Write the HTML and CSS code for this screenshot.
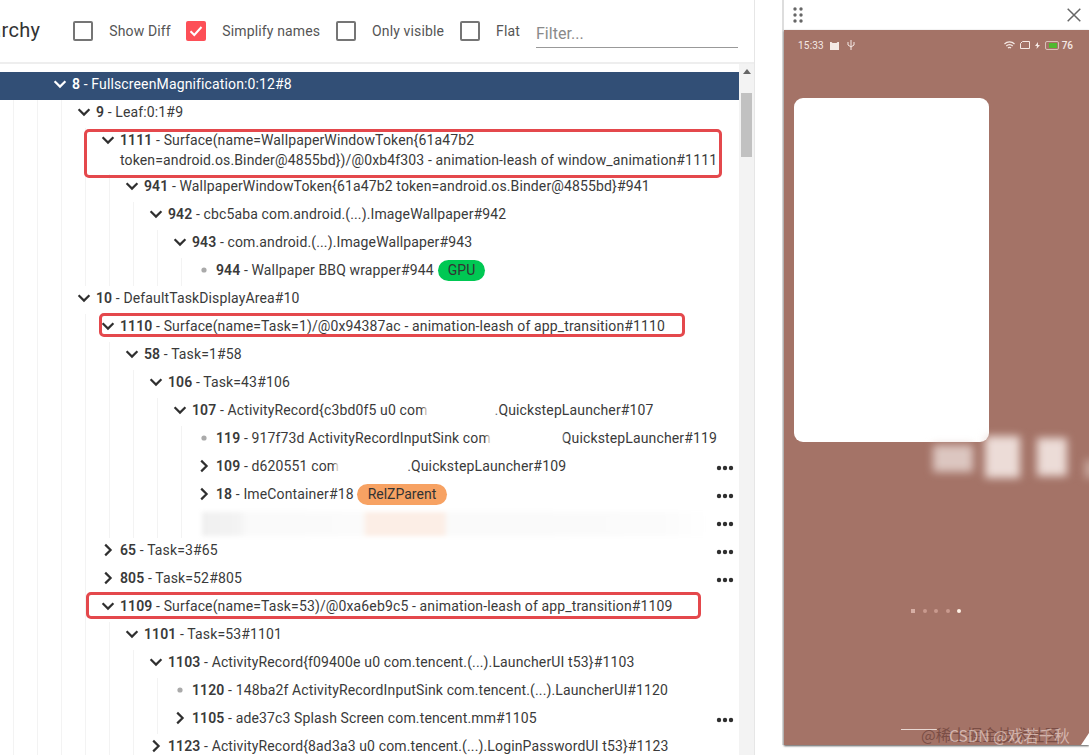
FILE: index.html
```html
<!DOCTYPE html>
<html lang="en">
<head>
<meta charset="utf-8">
<title>Hierarchy</title>
<link rel="stylesheet" href="styles.css">
</head>
<body>
<svg class="defs" width="0" height="0" aria-hidden="true">
  <symbol id="down" viewBox="0 0 24 24"><path d="M6.6 9.2 12 14.6l5.4-5.4" fill="none" stroke="currentColor" stroke-width="2.2"/></symbol>
  <symbol id="right" viewBox="0 0 24 24"><path d="M9.2 6.6 14.6 12l-5.4 5.4" fill="none" stroke="currentColor" stroke-width="2.2"/></symbol>
  <symbol id="leaf" viewBox="0 0 24 24"><circle cx="12" cy="12" r="2.6" fill="#aaa"/></symbol>
  <symbol id="more" viewBox="0 0 18 6"><circle cx="3" cy="3" r="2.2"/><circle cx="9" cy="3" r="2.2"/><circle cx="15" cy="3" r="2.2"/></symbol>
</svg>
<main class="app">
  <section class="panel">
    <header class="toolbar">
      <h1 class="title">Hierarchy</h1>
      <div class="opts">
        <label class="opt first"><span class="box"></span>Show Diff</label>
        <label class="opt"><span class="box on"><svg viewBox="0 0 20 20" width="20" height="20"><path d="M4.5 10.2 8.3 14l7.2-8" fill="none" stroke="#fff" stroke-width="2"/></svg></span>Simplify names</label>
        <label class="opt"><span class="box"></span>Only visible</label>
        <label class="opt"><span class="box"></span>Flat</label>
      </div>
      <div class="filter">Filter...</div>
    </header>
    <div class="treewrap">
      <div class="tree">
        <ul class="nest"><li><ul class="nest"><li>
          <div class="row sel"><span class="tog"><svg><use href="#down"/></svg></span><span class="lab"><b>8</b> - FullscreenMagnification:0:12#8</span></div>
          <ul class="nest">
            <li>
              <div class="row"><span class="tog"><svg><use href="#down"/></svg></span><span class="lab"><b>9</b> - Leaf:0:1#9</span></div>
              <ul class="nest"><li>
                <div class="row two"><span class="tog"><svg><use href="#down"/></svg></span><span class="lab"><b>1111</b> - Surface(name=WallpaperWindowToken{61a47b2<br>token=android.os.Binder@4855bd})/@0xb4f303 - animation-leash of window_animation#1111</span></div>
                <ul class="nest"><li>
                  <div class="row"><span class="tog"><svg><use href="#down"/></svg></span><span class="lab"><b>941</b> - WallpaperWindowToken{61a47b2 token=android.os.Binder@4855bd}#941</span></div>
                  <ul class="nest"><li>
                    <div class="row"><span class="tog"><svg><use href="#down"/></svg></span><span class="lab"><b>942</b> - cbc5aba com.android.(...).ImageWallpaper#942</span></div>
                    <ul class="nest"><li>
                      <div class="row"><span class="tog"><svg><use href="#down"/></svg></span><span class="lab"><b>943</b> - com.android.(...).ImageWallpaper#943</span></div>
                      <ul class="nest"><li>
                        <div class="row"><span class="tog"><svg><use href="#leaf"/></svg></span><span class="lab"><b>944</b> - Wallpaper BBQ wrapper#944</span><span class="chip gpu">GPU</span></div>
                      </li></ul>
                    </li></ul>
                  </li></ul>
                </li></ul>
              </li></ul>
            </li>
            <li>
              <div class="row"><span class="tog"><svg><use href="#down"/></svg></span><span class="lab"><b>10</b> - DefaultTaskDisplayArea#10</span></div>
              <ul class="nest">
                <li>
                  <div class="row"><span class="tog"><svg><use href="#down"/></svg></span><span class="lab"><b>1110</b> - Surface(name=Task=1)/@0x94387ac - animation-leash of app_transition#1110</span></div>
                  <ul class="nest"><li>
                    <div class="row"><span class="tog"><svg><use href="#down"/></svg></span><span class="lab"><b>58</b> - Task=1#58</span></div>
                    <ul class="nest"><li>
                      <div class="row"><span class="tog"><svg><use href="#down"/></svg></span><span class="lab"><b>106</b> - Task=43#106</span></div>
                      <ul class="nest"><li>
                        <div class="row"><span class="tog"><svg><use href="#down"/></svg></span><span class="lab"><b>107</b> - ActivityRecord{c3bd0f5 u0 com<span class="smear s1"></span>.QuickstepLauncher#107</span></div>
                        <ul class="nest">
                          <li><div class="row"><span class="tog"><svg><use href="#leaf"/></svg></span><span class="lab"><b>119</b> - 917f73d ActivityRecordInputSink com<span class="smear s2"></span>QuickstepLauncher#119</span></div></li>
                          <li><div class="row"><span class="tog"><svg><use href="#right"/></svg></span><span class="lab"><b>109</b> - d620551 com<span class="smear s3"></span>.QuickstepLauncher#109</span><svg class="more"><use href="#more"/></svg></div></li>
                          <li><div class="row"><span class="tog"><svg><use href="#right"/></svg></span><span class="lab"><b>18</b> - ImeContainer#18</span><span class="chip rel">RelZParent</span><svg class="more"><use href="#more"/></svg></div></li>
                          <li><div class="row"><span class="hazed"></span><svg class="more"><use href="#more"/></svg></div></li>
                        </ul>
                      </li></ul>
                    </li></ul>
                  </li></ul>
                </li>
                <li><div class="row"><span class="tog"><svg><use href="#right"/></svg></span><span class="lab"><b>65</b> - Task=3#65</span><svg class="more"><use href="#more"/></svg></div></li>
                <li><div class="row"><span class="tog"><svg><use href="#right"/></svg></span><span class="lab"><b>805</b> - Task=52#805</span><svg class="more"><use href="#more"/></svg></div></li>
                <li>
                  <div class="row"><span class="tog"><svg><use href="#down"/></svg></span><span class="lab"><b>1109</b> - Surface(name=Task=53)/@0xa6eb9c5 - animation-leash of app_transition#1109</span></div>
                  <ul class="nest"><li>
                    <div class="row"><span class="tog"><svg><use href="#down"/></svg></span><span class="lab"><b>1101</b> - Task=53#1101</span></div>
                    <ul class="nest">
                      <li>
                        <div class="row"><span class="tog"><svg><use href="#down"/></svg></span><span class="lab"><b>1103</b> - ActivityRecord{f09400e u0 com.tencent.(...).LauncherUI t53}#1103</span></div>
                        <ul class="nest">
                          <li><div class="row"><span class="tog"><svg><use href="#leaf"/></svg></span><span class="lab"><b>1120</b> - 148ba2f ActivityRecordInputSink com.tencent.(...).LauncherUI#1120</span></div></li>
                          <li><div class="row"><span class="tog"><svg><use href="#right"/></svg></span><span class="lab"><b>1105</b> - ade37c3 Splash Screen com.tencent.mm#1105</span><svg class="more"><use href="#more"/></svg></div></li>
                        </ul>
                      </li>
                      <li><div class="row"><span class="tog"><svg><use href="#right"/></svg></span><span class="lab"><b>1123</b> - ActivityRecord{8ad3a3 u0 com.tencent.(...).LoginPasswordUI t53}#1123</span></div></li>
                    </ul>
                  </li></ul>
                </li>
              </ul>
            </li>
          </ul>
        </li></ul></li></ul>
        <div class="mark m1"></div>
        <div class="mark m2"></div>
        <div class="mark m3"></div>
      </div>
      <div class="scrollbar">
        <span class="arrow"></span>
        <span class="thumb"></span>
      </div>
    </div>
  </section>
  <aside class="preview">
    <div class="previewbar">
      <svg class="grip" width="10" height="16" viewBox="0 0 10 16"><g fill="#666"><circle cx="2" cy="2" r="1.7"/><circle cx="8" cy="2" r="1.7"/><circle cx="2" cy="8" r="1.7"/><circle cx="8" cy="8" r="1.7"/><circle cx="2" cy="14" r="1.7"/><circle cx="8" cy="14" r="1.7"/></g></svg>
      <svg class="close" width="14" height="14" viewBox="0 0 14 14"><path d="M.7.7l12.6 12.6M13.3.7.7 13.3" stroke="#666" stroke-width="1.5" fill="none"/></svg>
    </div>
    <div class="screen">
      <div class="status">
        <span class="time">15:33</span>
        <svg width="9" height="9" viewBox="0 0 9 9"><path d="M0 1h1.5l1 1h4l1-1H9v8H0z" fill="#f5e9e5"/></svg>
        <svg class="usb" width="8" height="10" viewBox="0 0 8 10"><path d="M4 0v10M1 2v3l3 2 3-2V2" fill="none" stroke="#f5e9e5"/></svg>
        <span class="spacer"></span>
        <svg width="11" height="9" viewBox="0 0 11 9"><path d="M.5 3a7 7 0 0 1 10 0M2.300 5a4.500 4.500 0 0 1 6.400 0M4 7a2 2 0 0 1 3 0" fill="none" stroke="#f5e9e5" stroke-width="1.200"/></svg>
        <svg width="10" height="8" viewBox="0 0 10 8"><path d="M2.500.500h7v7H.5V2.500z" fill="none" stroke="#f5e9e5"/></svg>
        <svg width="5" height="7" viewBox="0 0 5 7"><path d="M3 0 0 4h2L1.500 7 5 3H3z" fill="#f5e9e5"/></svg>
        <span class="batt"><span class="level"></span></span>
        <span class="pct">76</span>
      </div>
      <div class="card"></div>
      <div class="ghosts"><span class="ghost g1"></span><span class="ghost g2"></span><span class="ghost g3"></span><span class="ghost g4"></span></div>
      <div class="pager"><i class="hollow"></i><i></i><i></i><i></i><i class="cur"></i></div>
      <div class="wm"><span class="wm-rule"></span><span class="wm-a">@稀土掘金技术社区</span><span class="wm-b">CSDN @戏若千秋</span></div>
      <span class="corner"></span>
    </div>
  </aside>
</main>
</body>
</html>
```
FILE: styles.css
```css
* { box-sizing: border-box; }
html, body { margin: 0; height: 100%; }
body {
  background: #fff;
  overflow: hidden;
  font-family: Roboto, "Noto Sans", sans-serif;
  font-size: 14px;
  color: #3a3a3a;
}
.defs { position: absolute; }
.app { display: flex; height: 755px; }

.panel {
  width: 755px;
  flex: none;
  display: flex;
  flex-direction: column;
  border-right: 1px solid #e6e6e6;
}
.toolbar {
  height: 64px;
  flex: none;
  display: flex;
  align-items: flex-start;
  border-bottom: 2px solid #eee;
}
.title {
  margin: 17px 33px 0 -47px;
  font-size: 20px;
  line-height: 26px;
  font-weight: 400;
  letter-spacing: .3px;
  color: #333;
  white-space: nowrap;
}
.opts { display: flex; gap: 16px; margin-top: 21px; }
.opt {
  display: flex;
  align-items: center;
  gap: 16px;
  height: 20px;
  letter-spacing: .13px;
  color: #555;
}
.opt.first { margin-right: -.4px; }
.box {
  width: 20px;
  height: 20px;
  border: 2px solid #757575;
  border-radius: 2px;
  display: flex;
  align-items: center;
  justify-content: center;
}
.box.on { background: #fd4f57; border: none; }
.filter {
  width: 202px;
  height: 28px;
  margin: 20px 0 0 16px;
  border-bottom: 1px solid #999;
  font-size: 16px;
  line-height: 27px;
  letter-spacing: .05px;
  color: #8a8a8a;
}

.treewrap { flex: 1; display: flex; min-height: 0; }
.tree {
  position: relative;
  flex: 1;
  min-width: 0;
  overflow: hidden;
  padding-top: 8px;
}
.nest {
  list-style: none;
  margin: 0 0 0 13px;
  padding: 0 0 0 10px;
  border-left: 1px solid #f3f3f3;
}
.row {
  position: relative;
  display: flex;
  height: 28px;
  line-height: 24px;
  padding-right: 5px;
  white-space: nowrap;
}
.row.two { height: 46px; line-height: 20px; padding-top: 2px; }
.row.sel { color: #fff; }
.row.sel::before {
  content: "";
  position: absolute;
  z-index: 0;
  top: 0;
  bottom: 0;
  left: -60px;
  right: 0;
  background: #324f76;
}
.tog { position: relative; flex: none; width: 24px; height: 24px; }
.row.two .tog { margin-top: -2px; }
.tog svg { display: block; width: 24px; height: 24px; color: #2f2f2f; }
.row.sel .tog svg { color: #fff; }
.lab { position: relative; letter-spacing: .135px; }
.lab b { font-weight: 600; letter-spacing: .1px; }
.chip {
  height: 21px;
  line-height: 21px;
  margin: 2px 0 0 4px;
  padding: 0 11px;
  border-radius: 11px;
  color: #333;
}
.gpu { background: #00c853; padding: 0 10px; }
.rel { background: #f7a263; margin-left: 3px; }
.more {
  margin: auto 0 auto auto;
  width: 18px;
  height: 6px;
  fill: #2f2f2f;
}
.smear {
  display: inline-block;
  height: 20px;
  vertical-align: -5px;
  background: #fff;
  filter: blur(2px);
  margin-left: -3px;
}
.s1 { width: 70px; }
.s2 { width: 74px; }
.s3 { width: 71px; }
.hazed {
  position: absolute;
  left: 10px;
  top: 2px;
  width: 508px;
  height: 24px;
  filter: blur(2px);
  background: linear-gradient(90deg, #f0f0f0 0, #f3f3f3 7%, #fafafa 9%, #fbfbfb 31.500%, #fceee6 32.500%, #fceee6 47.500%, #fafafa 48.500%, #fbfbfb 90%, #fff 100%);
}
.mark {
  position: absolute;
  border: 3px solid #e4484c;
  border-radius: 5px;
}
.m1 { left: 84px; top: 65px; width: 638px; height: 49px; }
.m2 { left: 99px; top: 249px; width: 586px; height: 24px; }
.m3 { left: 86px; top: 528px; width: 615px; height: 27px; }

.scrollbar {
  flex: none;
  width: 15px;
  position: relative;
  background: #f3f3f3;
  display: flex;
  flex-direction: column;
  align-items: center;
}
.arrow {
  margin-top: 5px;
  width: 0;
  height: 0;
  border: 4px solid transparent;
  border-top: 0;
  border-bottom: 5px solid #666;
}
.thumb {
  margin-top: 19px;
  width: 11px;
  height: 64px;
  background: #c1c1c1;
}

.preview {
  width: 307px;
  flex: none;
  margin-left: 27px;
  display: flex;
  flex-direction: column;
  border-left: 2px solid #ddd;
  height: 745px;
}
.previewbar {
  flex: none;
  height: 30px;
  display: flex;
  align-items: center;
  justify-content: space-between;
  padding: 0 8px 0 9px;
  background: #fff;
}
.screen {
  position: relative;
  flex: 1;
  background: #a47367;
  box-shadow: 0 1px 2px #555;
  overflow: hidden;
}
.status {
  display: flex;
  align-items: center;
  gap: 5px;
  height: 14px;
  margin: 8px 0 0 14px;
  padding-right: 16px;
  font-size: 10px;
  color: #f5e9e5;
}
.time { letter-spacing: .2px; margin-right: 1px; }
.usb { margin-left: 3px; }
.spacer { flex: 1; }
.status svg { flex: none; }
.batt {
  width: 14px;
  height: 9px;
  border: 1px solid #d8c0b8;
  border-radius: 2px;
  padding: 1px 1px 1px 3px;
  display: flex;
}
.level { flex: 1; background: #4fb82f; }
.pct { margin-left: -2px; font-weight: 500; }
.card {
  width: 195px;
  height: 344px;
  margin: 46px 0 0 10px;
  background: #fff;
  border-radius: 9px;
}
.ghosts {
  position: absolute;
  left: 149px;
  top: 406px;
  display: flex;
  align-items: flex-start;
  gap: 12px;
  filter: blur(4px);
}
.ghost { height: 42px; background: #ecdcd7; }
.g1 { width: 40px; height: 27px; margin-top: 9px; background: #dcc6c0; }
.g2 { width: 35px; }
.g3 { width: 30px; height: 38px; margin-left: 5px; margin-top: 2px; }
.g4 { width: 10px; height: 18px; margin-top: 24px; margin-left: 6px; background: #c9a89f; }
.pager {
  position: absolute;
  left: 127px;
  top: 579px;
  display: flex;
  gap: 7.500px;
}
.pager i { width: 4px; height: 4px; border-radius: 50%; background: #c99a8e; }
.pager i.hollow { border-radius: 0; background: #d6aea4; }
.pager i.cur { background: #fff2e6; }
.wm {
  position: absolute;
  right: 8px;
  bottom: 1px;
  width: 180px;
  height: 20px;
  font-family: "Noto Sans CJK SC", Roboto, sans-serif;
  font-size: 15.500px;
  line-height: 20px;
  white-space: nowrap;
}
.wm-rule {
  position: absolute;
  left: 0;
  top: 5px;
  width: 36px;
  height: 1px;
  background: #e8d8d3;
}
.wm-a {
  position: absolute;
  left: 20px;
  top: 0;
  color: rgba(80, 40, 35, .5);
}
.wm-b {
  position: absolute;
  left: 48px;
  top: 1px;
  color: rgba(255, 240, 235, .55);
}
.corner {
  position: absolute;
  right: 0;
  bottom: 0;
  border-left: 8px solid transparent;
  border-bottom: 12px solid #fff;
}
```
